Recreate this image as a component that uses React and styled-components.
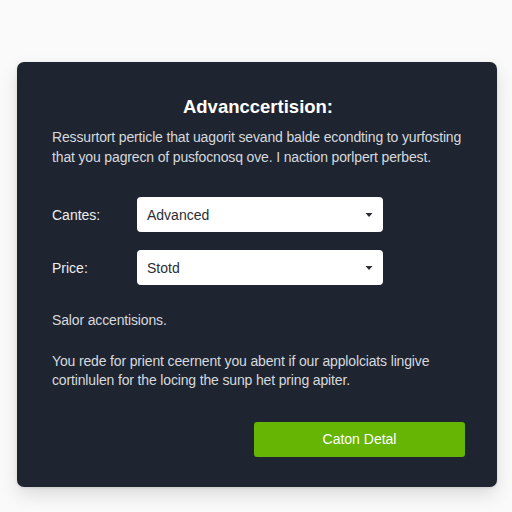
import React from "react";
import styled, { createGlobalStyle } from "styled-components";

const Global = createGlobalStyle`
  html, body { margin: 0; padding: 0; background: #fafafa; }
  body { font-family: "Liberation Sans", Arial, sans-serif; }
`;

const Page = styled.div`
  width: 512px;
  height: 512px;
  padding: 62px 15px 0 17px;
  box-sizing: border-box;
`;

const Card = styled.div`
  width: 480px;
  height: 425px;
  box-sizing: border-box;
  background: #1f2530;
  border-radius: 7px;
  box-shadow: 0 8px 18px rgba(0, 0, 0, 0.12), 0 1px 3px rgba(0, 0, 0, 0.1);
  padding: 34px 28px 0 35px;
  display: flex;
  flex-direction: column;
`;

const Title = styled.h1`
  margin: 0;
  text-align: center;
  font-size: 18.5px;
  font-weight: 700;
  color: #ffffff;
  line-height: 22px;
  padding-right: 5px;
`;

const Para = styled.p`
  margin: ${(p) => p.$mt}px 0 0 0;
  font-size: 14px;
  letter-spacing: -0.15px;
  line-height: 19.5px;
  color: #d6d9de;
`;

const Row = styled.div`
  display: flex;
  align-items: center;
  margin-top: ${(p) => p.$mt}px;
`;

const Label = styled.span`
  width: 85px;
  font-size: 14px;
  color: #eceef1;
`;

const Select = styled.div`
  width: 246px;
  height: 35px;
  box-sizing: border-box;
  background: #ffffff;
  border-radius: 4px;
  display: flex;
  align-items: center;
  justify-content: space-between;
  padding: 0 10px 0 10px;
  font-size: 14px;
  color: #2a2e35;
`;

const Chevron = styled.svg`
  width: 8px;
  height: 6px;
`;

const Footer = styled.div`
  display: flex;
  justify-content: flex-end;
  margin-top: 31px;
  padding-right: 4px;
`;

const Button = styled.button`
  width: 211px;
  height: 35px;
  border: none;
  border-radius: 3px;
  background: #66b404;
  color: #ffffff;
  font-family: "Liberation Sans", Arial, sans-serif;
  font-size: 14px;
  cursor: pointer;
`;

const Caret = () => (
  <Chevron viewBox="0 0 8 6">
    <path d="M0.5 1 L7.5 1 L4 5 Z" fill="#2a2e35" />
  </Chevron>
);

export default function App() {
  return (
    <>
      <Global />
      <Page>
        <Card>
          <Title>Advanccertision:</Title>
          <Para $mt={10}>
            Ressurtort perticle that uagorit sevand balde econdting to yurfosting
            that you pagrecn of pusfocnosq ove. I naction porlpert perbest.
          </Para>
          <Row $mt={30}>
            <Label>Cantes:</Label>
            <Select>
              Advanced
              <Caret />
            </Select>
          </Row>
          <Row $mt={18}>
            <Label>Price:</Label>
            <Select>
              Stotd
              <Caret />
            </Select>
          </Row>
          <Para $mt={26}>Salor accentisions.</Para>
          <Para $mt={21}>
            You rede for prient ceernent you abent if our applolciats lingive
            cortinlulen for the locing the sunp het pring apiter.
          </Para>
          <Footer>
            <Button>Caton Detal</Button>
          </Footer>
        </Card>
      </Page>
    </>
  );
}
